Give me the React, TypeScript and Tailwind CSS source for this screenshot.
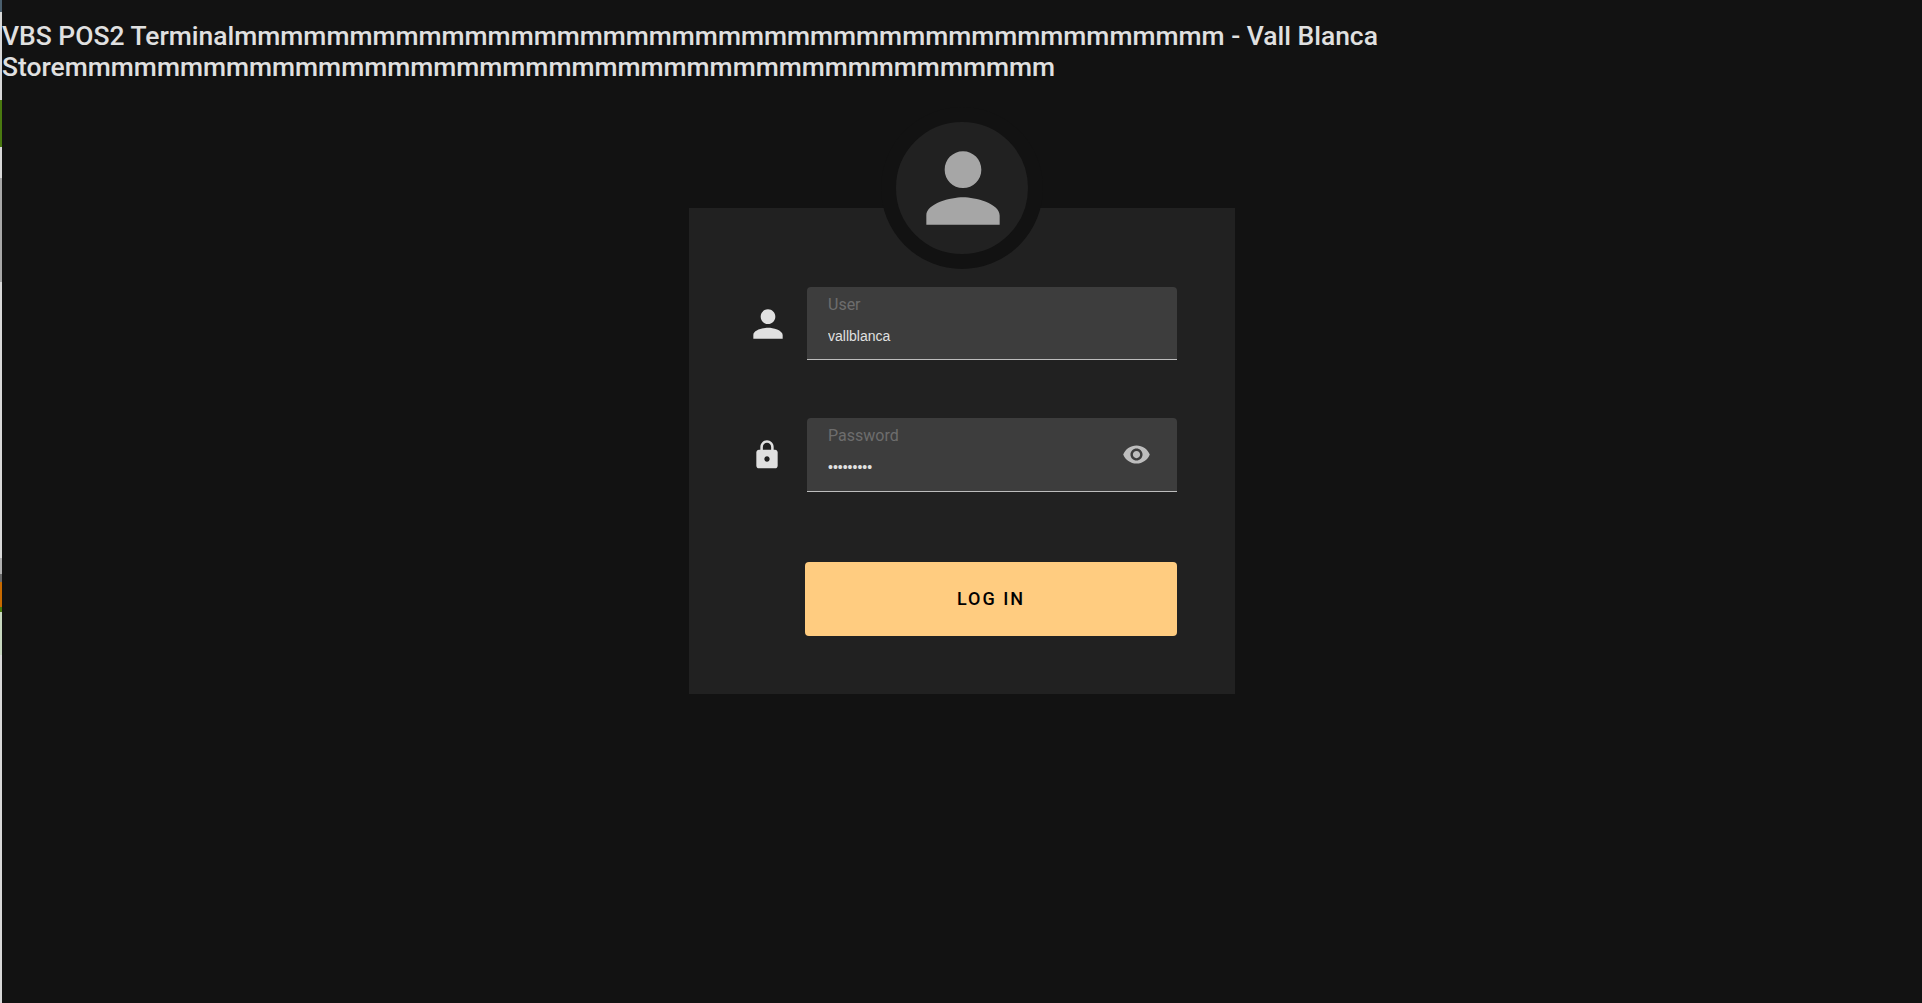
function PersonIcon({ className }: { className?: string }) {
  return (
    <svg viewBox="0 0 24 24" fill="currentColor" className={className}>
      <path d="M12 12c2.21 0 4-1.79 4-4s-1.79-4-4-4-4 1.79-4 4 1.79 4 4 4zm0 2c-2.67 0-8 1.34-8 4v2h16v-2c0-2.66-5.33-4-8-4z" />
    </svg>
  );
}

function LockIcon({ className }: { className?: string }) {
  return (
    <svg viewBox="0 0 24 24" fill="currentColor" className={className}>
      <path d="M18 8h-1V6c0-2.76-2.24-5-5-5S7 3.24 7 6v2H6c-1.1 0-2 .9-2 2v10c0 1.1.9 2 2 2h12c1.1 0 2-.9 2-2V10c0-1.1-.9-2-2-2zm-6 9c-1.1 0-2-.9-2-2s.9-2 2-2 2 .9 2 2-.9 2-2 2zm3.1-9H8.9V6c0-1.71 1.39-3.1 3.1-3.1 1.71 0 3.1 1.39 3.1 3.1v2z" />
    </svg>
  );
}

function EyeIcon({ className }: { className?: string }) {
  return (
    <svg viewBox="0 0 24 24" fill="currentColor" className={className}>
      <path d="M12 4.5C7 4.5 2.73 7.61 1 12c1.73 4.39 6 7.5 11 7.5s9.27-3.11 11-7.5c-1.73-4.39-6-7.5-11-7.5zM12 17c-2.76 0-5-2.24-5-5s2.24-5 5-5 5 2.24 5 5-2.24 5-5 5zm0-8c-1.66 0-3 1.34-3 3s1.34 3 3 3 3-1.34 3-3-1.34-3-3-3z" />
    </svg>
  );
}

const M = 'm'.repeat(43);

export default function App() {
  return (
    <div className="flex h-screen overflow-hidden bg-[#121212] font-['Roboto',sans-serif]">
      {/* sliver of the window behind */}
      <div className="flex w-[2px] shrink-0 flex-col bg-[#d8d8d8]">
        <div className="h-[12px] bg-[#4a5f6e]" />
        <div className="h-[88px]" />
        <div className="h-[47px] bg-[#4a7a10]" />
        <div className="h-[31px]" />
        <div className="h-[104px] bg-[#a8a8a8]" />
        <div className="h-[276px]" />
        <div className="h-[16px] bg-[#b0b0b0]" />
        <div className="h-[8px] bg-[#6a6a6a]" />
        <div className="h-[25px] bg-[#c86a00]" />
        <div className="h-[5px] bg-[#4a7a10]" />
        <div className="h-[43px] bg-[#c8d8c0]" />
      </div>

      <div className="min-w-0 flex-1">
        <h1 className="pt-[20px] text-[26.45px] leading-[31px] font-medium text-[#e0e0e0]">
          VBS POS2 Terminal{M} - Vall Blanca Store{M}
        </h1>

        <div className="relative ml-[687px] mt-[126px] h-[486px] w-[546px] bg-[#212121] pt-[79px]">
          {/* avatar */}
          <div className="absolute left-[192px] top-[-101px] flex h-[162px] w-[162px] items-center justify-center rounded-full border-[15px] border-[#121212] bg-[#212121]">
            <PersonIcon className="ml-[2px] h-[110px] w-[110px] text-[#a6a6a6]" />
          </div>

          <div className="flex h-[73px] items-center">
            <div className="flex w-[118px] justify-center pl-[39px]">
              <PersonIcon className="h-[44px] w-[44px] text-[#e0e0e0]" />
            </div>
            <div className="flex h-full w-[370px] flex-col rounded-t border-b border-[#bdbdbd] bg-[#3d3d3d] px-[21px]">
              <label className="pt-[8px] text-base leading-[20px] text-[#6d6d6d]">User</label>
              <input
                readOnly
                value="vallblanca"
                className="mt-[11px] w-full bg-transparent font-['Liberation_Sans',sans-serif] text-[14px] text-[#e0e0e0] outline-none"
              />
            </div>
          </div>

          <div className="mt-[58px] flex h-[74px] items-center">
            <div className="flex w-[118px] justify-center pl-[38px]">
              <LockIcon className="h-[32px] w-[32px] text-[#e0e0e0]" />
            </div>
            <div className="flex h-full w-[370px] items-center rounded-t border-b border-[#bdbdbd] bg-[#3d3d3d] pl-[21px] pr-[26px]">
              <div className="flex h-full min-w-0 flex-1 flex-col">
                <label className="pt-[8px] text-base leading-[20px] text-[#6d6d6d]">Password</label>
                <input
                  readOnly
                  type="password"
                  value="vallblanc"
                  className="mt-[11px] w-full bg-transparent font-['Liberation_Sans',sans-serif] text-[14px] text-[#e0e0e0] outline-none"
                />
              </div>
              <EyeIcon className="h-[29px] w-[29px] text-[#bdbdbd]" />
            </div>
          </div>

          <div className="mt-[70px] pl-[116px]">
            <button className="h-[74px] w-[372px] rounded bg-[#ffcc80] pb-[2px] text-[18px] font-medium tracking-[2px] text-black">
              LOG IN
            </button>
          </div>
        </div>
      </div>
    </div>
  );
}
